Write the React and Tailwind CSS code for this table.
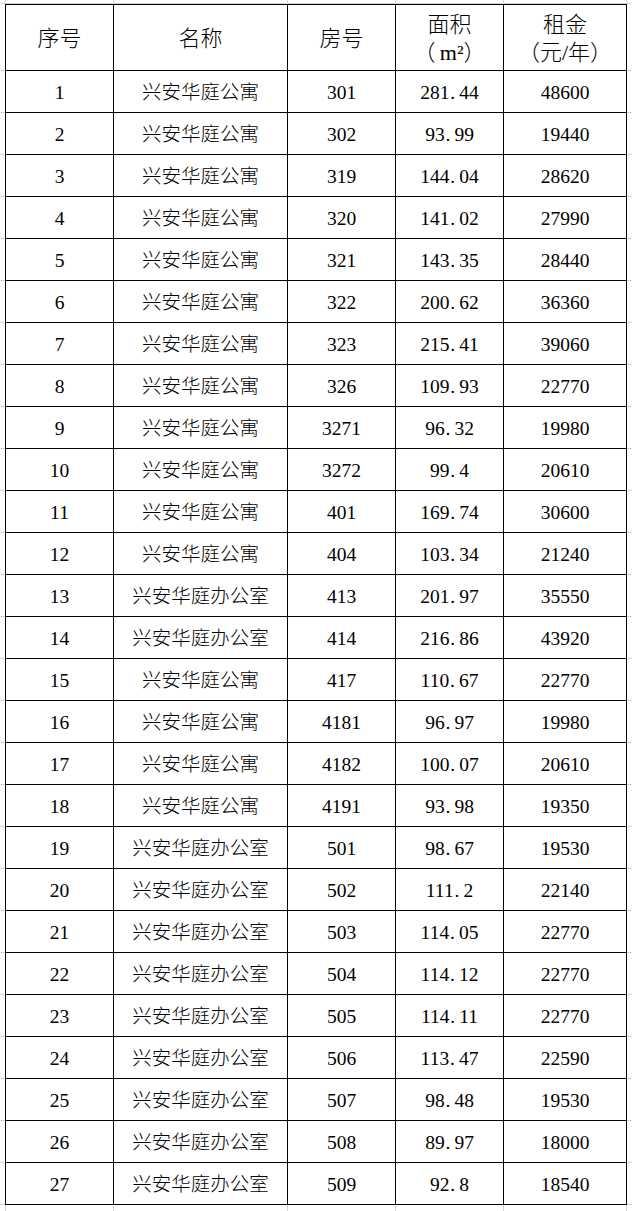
const rows = [
  [1, "兴安华庭公寓", "301", "281.44", "48600"],
  [2, "兴安华庭公寓", "302", "93.99", "19440"],
  [3, "兴安华庭公寓", "319", "144.04", "28620"],
  [4, "兴安华庭公寓", "320", "141.02", "27990"],
  [5, "兴安华庭公寓", "321", "143.35", "28440"],
  [6, "兴安华庭公寓", "322", "200.62", "36360"],
  [7, "兴安华庭公寓", "323", "215.41", "39060"],
  [8, "兴安华庭公寓", "326", "109.93", "22770"],
  [9, "兴安华庭公寓", "3271", "96.32", "19980"],
  [10, "兴安华庭公寓", "3272", "99.4", "20610"],
  [11, "兴安华庭公寓", "401", "169.74", "30600"],
  [12, "兴安华庭公寓", "404", "103.34", "21240"],
  [13, "兴安华庭办公室", "413", "201.97", "35550"],
  [14, "兴安华庭办公室", "414", "216.86", "43920"],
  [15, "兴安华庭公寓", "417", "110.67", "22770"],
  [16, "兴安华庭公寓", "4181", "96.97", "19980"],
  [17, "兴安华庭公寓", "4182", "100.07", "20610"],
  [18, "兴安华庭公寓", "4191", "93.98", "19350"],
  [19, "兴安华庭办公室", "501", "98.67", "19530"],
  [20, "兴安华庭办公室", "502", "111.2", "22140"],
  [21, "兴安华庭办公室", "503", "114.05", "22770"],
  [22, "兴安华庭办公室", "504", "114.12", "22770"],
  [23, "兴安华庭办公室", "505", "114.11", "22770"],
  [24, "兴安华庭办公室", "506", "113.47", "22590"],
  [25, "兴安华庭办公室", "507", "98.48", "19530"],
  [26, "兴安华庭办公室", "508", "89.97", "18000"],
  [27, "兴安华庭办公室", "509", "92.8", "18540"]
];

// SimSun-style half-width period: give the dot a full digit cell
const Area = ({ value }) => {
  const [int, dec] = value.split(".");
  return (
    <span>
      {int}
      {dec !== undefined && <span className="inline-block w-[0.5em] pl-[0.04em] text-left">.</span>}
      {dec}
    </span>
  );
};

// full-width brackets, each in its own em box
const Paren = ({ children }) => (
  <span className="inline-flex items-baseline">
    <span className="inline-block w-[1em] text-right">（</span>
    {children}
    <span className="inline-block w-[1em] text-left">）</span>
  </span>
);

const cell = "flex items-center justify-center border-r border-b border-black";

function GridStrip({ className }) {
  return (
    <div className={`flex ${className}`}>
      <div className="w-[6px] shrink-0 border-r border-[#d4d4d4]" />
      <div className="w-[108px] shrink-0 border-r border-[#d4d4d4]" />
      <div className="w-[174px] shrink-0 border-r border-[#d4d4d4]" />
      <div className="w-[108px] shrink-0 border-r border-[#d4d4d4]" />
      <div className="w-[108px] shrink-0 border-r border-[#d4d4d4]" />
      <div className="w-[123px] shrink-0 border-r border-[#d4d4d4]" />
      <div className="flex-1" />
    </div>
  );
}

function SideStrip() {
  return (
    <div className="flex w-[5px] shrink-0 flex-col pt-px">
      <div className="h-[66px] border-b border-[#d4d4d4]" />
      {rows.map((r) => (
        <div key={r[0]} className="h-[42px] border-b border-[#d4d4d4]" />
      ))}
    </div>
  );
}

export default function App() {
  return (
    <div
      className="flex h-[1211px] w-[632px] flex-col overflow-hidden bg-white font-light text-black"
      style={{ fontFamily: '"Liberation Serif", "Noto Sans CJK SC", serif' }}
    >
      <GridStrip className="h-[4px] shrink-0 border-b border-[#d4d4d4]" />
      <div className="flex shrink-0">
        <SideStrip />
        <div className="grid w-[622px] grid-cols-[108px_174px_108px_108px_123px] border-t border-l border-black">
          <div className={`${cell} h-[66px] pt-[2px] text-[22px]`}>序号</div>
          <div className={`${cell} h-[66px] pt-[2px] text-[22px]`}>名称</div>
          <div className={`${cell} h-[66px] pt-[2px] text-[22px]`}>房号</div>
          <div className={`${cell} h-[66px] flex-col pt-[2px] text-[22px] leading-[28px]`}>
            <span>面积</span>
            <Paren>
              <span className="pl-[0.2em]">m²</span>
            </Paren>
          </div>
          <div className={`${cell} h-[66px] flex-col pt-[2px] text-[22px] leading-[28px]`}>
            <span>租金</span>
            <Paren>元/年</Paren>
          </div>
          {rows.map(([no, name, room, area, rent]) => (
            <div key={no} className="contents text-[19.5px]">
              <div className={`${cell} h-[42px] pt-[3px]`}>{no}</div>
              <div className={`${cell} h-[42px] pt-[3px]`}>{name}</div>
              <div className={`${cell} h-[42px] pt-[3px]`}>{room}</div>
              <div className={`${cell} h-[42px] pt-[3px]`}>
                <Area value={area} />
              </div>
              <div className={`${cell} h-[42px] pt-[3px]`}>{rent}</div>
            </div>
          ))}
        </div>
        <SideStrip />
      </div>
      <GridStrip className="flex-1" />
    </div>
  );
}
